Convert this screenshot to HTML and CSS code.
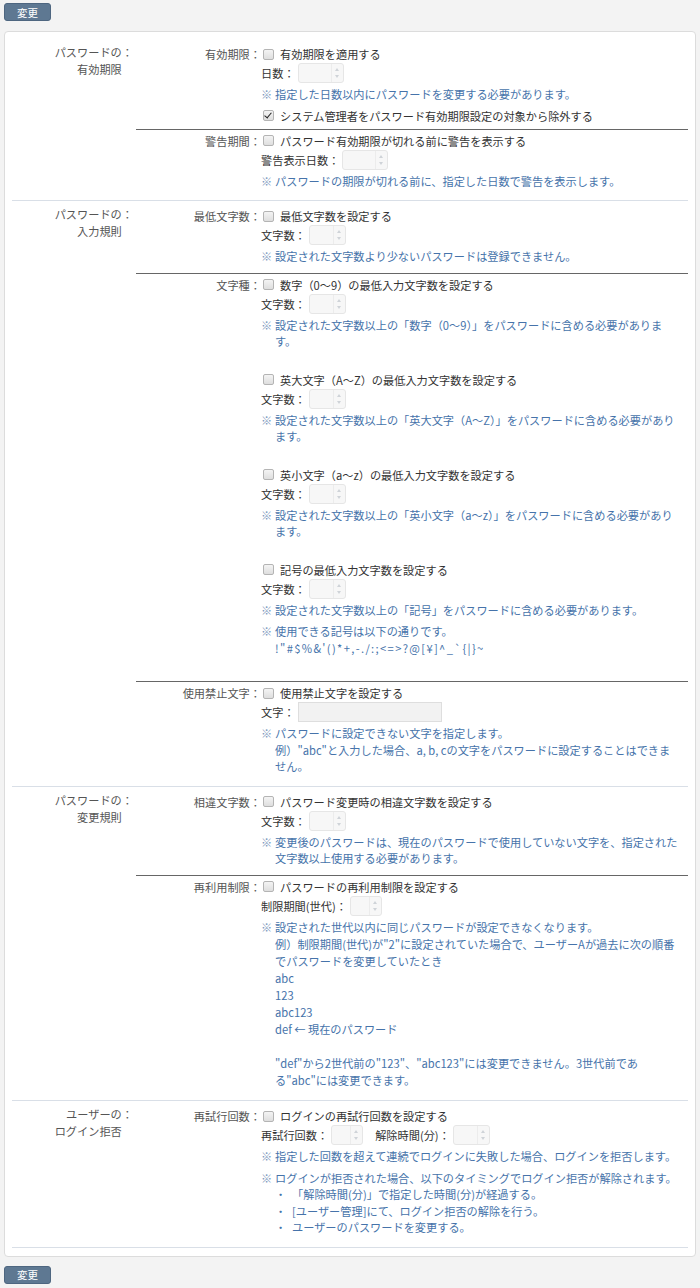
FILE: index.html
```html
<!DOCTYPE html>
<html lang="ja">
<head>
    <meta charset="UTF-8">
    <meta name="viewport" content="width=device-width, initial-scale=1.0">
    <title>パスワードポリシー設定</title>
    <link rel="stylesheet" href="styles.css">
</head>
<body>

<div class="page">
    <button class="btn">変更</button>

    <div class="panel">

        <!-- パスワードの有効期限 -->
        <div class="group">
            <div class="group-title"><span>パスワードの：</span><span class="line2">有効期限</span></div>
            <div class="group-body">
                <div class="item">
                    <div class="item-label">有効期限：</div>
                    <div class="item-body">
                        <label class="check"><span class="box"></span>有効期限を適用する</label>
                        <div class="field">日数：<span class="spin w-l"><i></i></span></div>
                        <div class="note"><span class="mark">※</span><span>指定した日数以内にパスワードを変更する必要があります。</span></div>
                        <label class="check"><span class="box on"></span>システム管理者をパスワード有効期限設定の対象から除外する</label>
                    </div>
                </div>
                <div class="item">
                    <div class="item-label">警告期間：</div>
                    <div class="item-body">
                        <label class="check"><span class="box"></span>パスワード有効期限が切れる前に警告を表示する</label>
                        <div class="field">警告表示日数：<span class="spin w-l"><i></i></span></div>
                        <div class="note"><span class="mark">※</span><span>パスワードの期限が切れる前に、指定した日数で警告を表示します。</span></div>
                    </div>
                </div>
            </div>
        </div>

        <!-- パスワードの入力規則 -->
        <div class="group">
            <div class="group-title"><span>パスワードの：</span><span class="line2">入力規則</span></div>
            <div class="group-body">
                <div class="item">
                    <div class="item-label">最低文字数：</div>
                    <div class="item-body">
                        <label class="check"><span class="box"></span>最低文字数を設定する</label>
                        <div class="field">文字数：<span class="spin w-m"><i></i></span></div>
                        <div class="note"><span class="mark">※</span><span>設定された文字数より少ないパスワードは登録できません。</span></div>
                    </div>
                </div>
                <div class="item">
                    <div class="item-label">文字種：</div>
                    <div class="item-body">
                        <div class="sub">
                            <label class="check"><span class="box"></span>数字（0～9）の最低入力文字数を設定する</label>
                            <div class="field">文字数：<span class="spin w-m"><i></i></span></div>
                            <div class="note"><span class="mark">※</span><span>設定された文字数以上の「数字（0～9）」をパスワードに含める必要があります。</span></div>
                        </div>
                        <div class="sub">
                            <label class="check"><span class="box"></span>英大文字（A～Z）の最低入力文字数を設定する</label>
                            <div class="field">文字数：<span class="spin w-m"><i></i></span></div>
                            <div class="note"><span class="mark">※</span><span>設定された文字数以上の「英大文字（A～Z）」をパスワードに含める必要があります。</span></div>
                        </div>
                        <div class="sub">
                            <label class="check"><span class="box"></span>英小文字（a～z）の最低入力文字数を設定する</label>
                            <div class="field">文字数：<span class="spin w-m"><i></i></span></div>
                            <div class="note"><span class="mark">※</span><span>設定された文字数以上の「英小文字（a～z）」をパスワードに含める必要があります。</span></div>
                        </div>
                        <div class="sub">
                            <label class="check"><span class="box"></span>記号の最低入力文字数を設定する</label>
                            <div class="field">文字数：<span class="spin w-m"><i></i></span></div>
                            <div class="note"><span class="mark">※</span><span>設定された文字数以上の「記号」をパスワードに含める必要があります。</span></div>
                            <div class="note"><span class="mark">※</span><span>使用できる記号は以下の通りです。<br><span class="symbols">!"#$%&amp;'()*+,-./:;&lt;=&gt;?@[¥]^_`{|}~</span></span></div>
                        </div>
                    </div>
                </div>
                <div class="item">
                    <div class="item-label">使用禁止文字：</div>
                    <div class="item-body">
                        <label class="check"><span class="box"></span>使用禁止文字を設定する</label>
                        <div class="field">文字：<span class="text-box"></span></div>
                        <div class="note"><span class="mark">※</span><span>パスワードに設定できない文字を指定します。<br>例）"abc"と入力した場合、a, b, cの文字をパスワードに設定することはできません。</span></div>
                    </div>
                </div>
            </div>
        </div>

        <!-- パスワードの変更規則 -->
        <div class="group">
            <div class="group-title"><span>パスワードの：</span><span class="line2">変更規則</span></div>
            <div class="group-body">
                <div class="item">
                    <div class="item-label">相違文字数：</div>
                    <div class="item-body">
                        <label class="check"><span class="box"></span>パスワード変更時の相違文字数を設定する</label>
                        <div class="field">文字数：<span class="spin w-m"><i></i></span></div>
                        <div class="note"><span class="mark">※</span><span>変更後のパスワードは、現在のパスワードで使用していない文字を、指定された文字数以上使用する必要があります。</span></div>
                    </div>
                </div>
                <div class="item">
                    <div class="item-label">再利用制限：</div>
                    <div class="item-body">
                        <label class="check"><span class="box"></span>パスワードの再利用制限を設定する</label>
                        <div class="field">制限期間(世代)：<span class="spin w-s"><i></i></span></div>
                        <div class="note long"><span class="mark">※</span><span>設定された世代以内に同じパスワードが設定できなくなります。<br>例）制限期間(世代)が"2"に設定されていた場合で、ユーザーAが過去に次の順番でパスワードを変更していたとき<br>abc<br>123<br>abc123<br>def ← 現在のパスワード<br><br>"def"から2世代前の"123"、"abc123"には変更できません。3世代前である"abc"には変更できます。</span></div>
                    </div>
                </div>
            </div>
        </div>

        <!-- ユーザーのログイン拒否 -->
        <div class="group">
            <div class="group-title"><span>ユーザーの：</span><span class="line2">ログイン拒否</span></div>
            <div class="group-body">
                <div class="item">
                    <div class="item-label">再試行回数：</div>
                    <div class="item-body">
                        <label class="check"><span class="box"></span>ログインの再試行回数を設定する</label>
                        <div class="field">再試行回数：<span class="spin w-s"><i></i></span><span class="gap">解除時間(分)：</span><span class="spin w-m"><i></i></span></div>
                        <div class="note"><span class="mark">※</span><span>指定した回数を超えて連続でログインに失敗した場合、ログインを拒否します。</span></div>
                        <div class="note"><span class="mark">※</span><span>ログインが拒否された場合、以下のタイミングでログイン拒否が解除されます。
                            <ul class="bullets">
                                <li>「解除時間(分)」で指定した時間(分)が経過する。</li>
                                <li>[ユーザー管理]にて、ログイン拒否の解除を行う。</li>
                                <li>ユーザーのパスワードを変更する。</li>
                            </ul>
                        </span></div>
                    </div>
                </div>
            </div>
        </div>

    </div>

    <button class="btn">変更</button>
</div>

</body>
</html>
```

FILE: styles.css
```css
body {
    margin: 0;
    background-color: #f3f3f3;
    font-family: "Noto Sans CJK JP", "Noto Sans", sans-serif;
    font-size: 11.2px;
    color: #333;
}
.page {
    padding: 3px 4px 5px;
}
.btn {
    display: block;
    width: 47px;
    height: 18px;
    padding: 0;
    font-family: inherit;
    font-size: 10.5px;
    color: #fff;
    background-color: #5e7892;
    border: 1px solid #4e6680;
    border-radius: 3px;
}
.panel {
    margin: 10px 0 9px;
    width: 676px;
    padding: 7px 7px 8px;
    background-color: #fff;
    border: 1px solid #dcdcdc;
    border-radius: 4px;
}
.group {
    display: flex;
    padding: 4px 0 3px;
    border-bottom: 1px solid #d9dfe7;
}
.group-title {
    width: 119px;
    padding: 1px 3px 0 2px;
    text-align: right;
    line-height: 17px;
    color: #555;
}
.group-title span {
    display: block;
}
.group-title .line2 {
    padding-right: 1em;
}
.group-body {
    flex: 1;
}
.item {
    display: flex;
    padding: 2px 0 4px;
}
.item + .item {
    border-top: 1px solid #666;
}
.item-label {
    width: 125px;
    text-align: right;
    line-height: 18px;
    color: #555;
}
.item-body {
    flex: 1;
}
.check {
    display: flex;
    align-items: center;
    height: 18px;
    padding-left: 2px;
}
.box {
    width: 9px;
    height: 9px;
    margin-right: 6px;
    border: 1px solid #b4b4b4;
    border-radius: 2px;
    background: linear-gradient(#f4f4f4, #dedede);
    position: relative;
}
.box.on::after {
    content: "";
    position: absolute;
    left: 2px;
    top: 0;
    width: 3px;
    height: 6px;
    border: solid #222;
    border-width: 0 1.5px 1.5px 0;
    transform: rotate(40deg);
}
.field {
    display: flex;
    align-items: center;
    height: 20px;
}
.spin {
    position: relative;
    height: 18px;
    margin-left: 3px;
    background-color: #f7f7f7;
    border: 1px solid #e6e6e6;
    border-radius: 3px;
}
.spin i {
    position: absolute;
    right: 0;
    top: 0;
    bottom: 0;
    width: 11px;
    border-left: 1px solid #ececec;
}
.spin i::before,
.spin i::after {
    content: "";
    position: absolute;
    left: 3px;
    border-left: 2.5px solid transparent;
    border-right: 2.5px solid transparent;
}
.spin i::before {
    top: 4px;
    border-bottom: 3px solid #cfd3d8;
}
.spin i::after {
    bottom: 4px;
    border-top: 3px solid #cfd3d8;
}
.w-s {
    width: 30px;
}
.w-m {
    width: 35px;
}
.w-l {
    width: 44px;
}
.text-box {
    width: 142px;
    height: 18px;
    margin-left: 3px;
    background-color: #f2f2f2;
    border: 1px solid #dedede;
}
.gap {
    margin-left: 12px;
}
.note {
    display: flex;
    margin: 3px 0 4px;
    padding-right: 8px;
    line-height: 16.5px;
    color: #4673aa;
}
.note + .note {
    margin-top: 5px;
}
.note.long {
    line-height: 17.1px;
}
.mark {
    flex: none;
    width: 14px;
    color: #7d99bd;
}
.symbols {
    letter-spacing: 1.35px;
}
.sub {
    padding-bottom: 17px;
}
.bullets {
    list-style: none;
    margin: 0;
    padding: 0;
}
.bullets li::before {
    content: "・";
    display: inline-block;
    width: 17px;
}
```
